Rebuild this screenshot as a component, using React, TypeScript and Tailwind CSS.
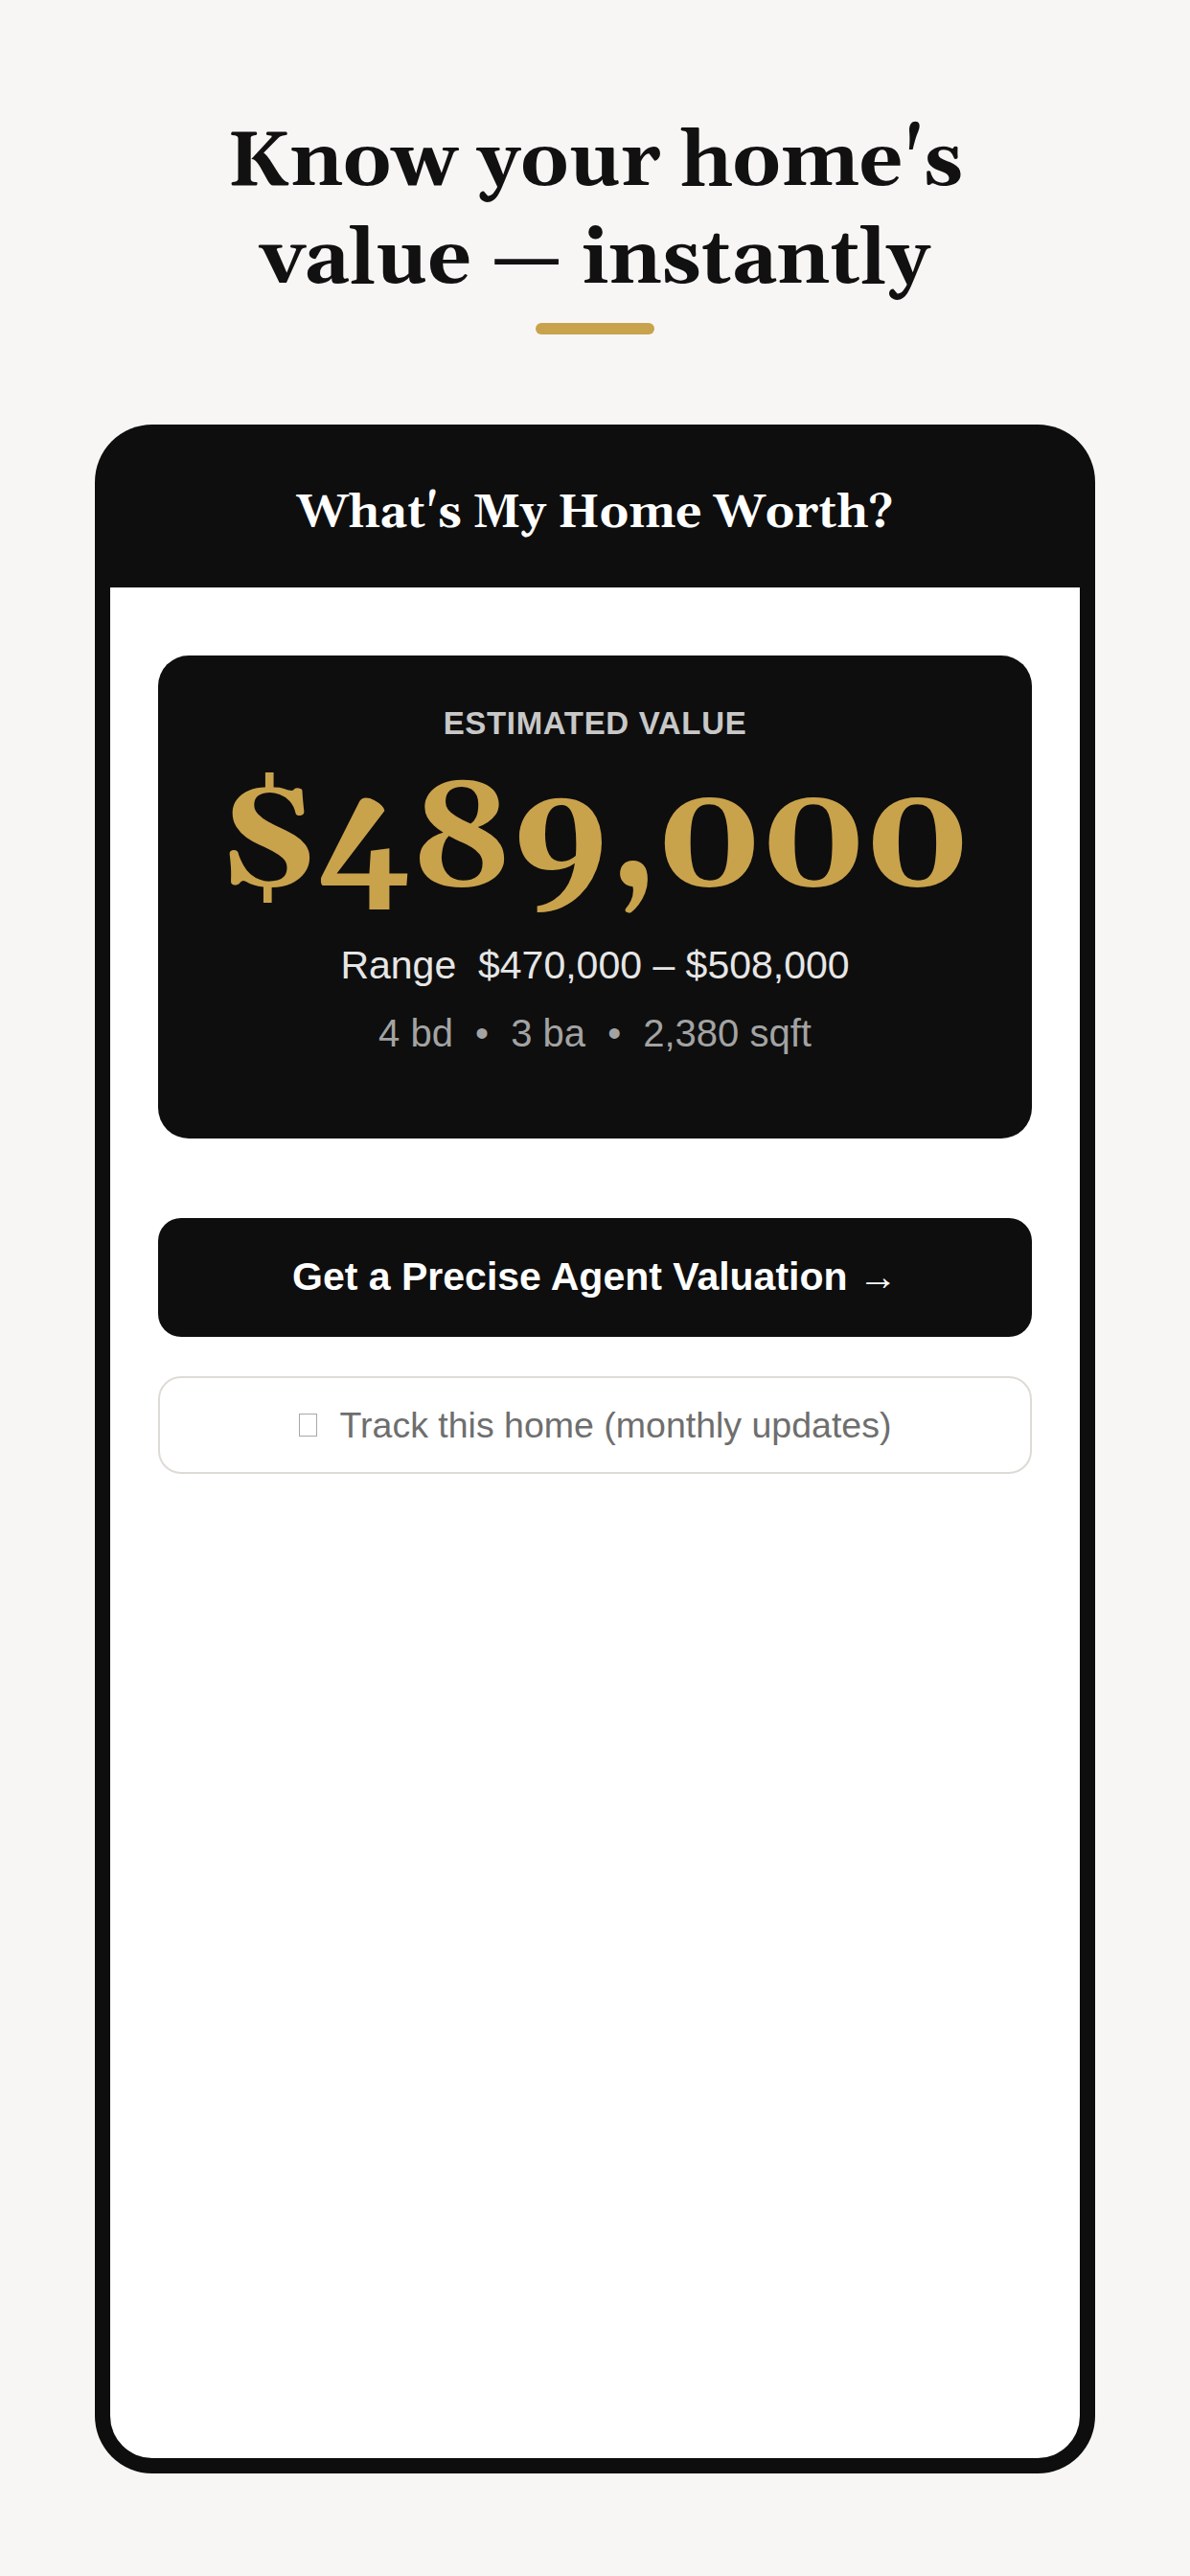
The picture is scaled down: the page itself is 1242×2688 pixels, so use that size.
import React from "react";

const serif = "font-['Georgia','Gelasio','DejaVu_Serif',serif]";
const sans = "font-['Liberation_Sans','Arial',sans-serif]";

export default function App() {
  return (
    <div className="min-h-[2688px] bg-[#f7f6f4] pt-[119px]">
      {/* Heading */}
      <h1
        className={`${serif} text-center text-[80px] font-bold leading-[1.27] text-[#111111]`}
      >
        Know your home's
        <br />
        value — instantly
      </h1>
      <div className="mx-auto mt-[15px] h-3 w-[124px] rounded-full bg-[#c9a24c]" />

      {/* Phone frame */}
      <div className="mx-auto mt-[94px] flex h-[2138px] w-[1044px] flex-col rounded-[60px] bg-[#0e0e0e] p-4">
        <div className="flex h-[154px] shrink-0 items-center justify-center">
          <h2 className={`${serif} text-[48px] font-bold text-white`}>
            What's My Home Worth?
          </h2>
        </div>

        <div className={`${sans} flex-1 rounded-b-[44px] bg-white px-[50px] pt-[71px]`}>
          {/* Estimate card */}
          <div className="flex h-[504px] flex-col items-center rounded-[32px] bg-[#0e0e0e] pt-[54px] text-center">
            <p className="text-[33px] font-bold uppercase leading-none tracking-[0.02em] text-[#c8c8c8]">
              Estimated Value
            </p>
            <p
              className={`${serif} mt-[30px] text-[155px] font-bold leading-none text-[#c9a24c]`}
            >
              $489,000
            </p>
            <p className="mt-[31px] whitespace-pre text-[41px] leading-none text-[#e6e6e6]">
              {"Range  $470,000 – $508,000"}
            </p>
            <p className="mt-[30px] text-[40px] leading-none text-[#a3a3a3]">
              4 bd <span className="mx-3">•</span> 3 ba{" "}
              <span className="mx-3">•</span> 2,380 sqft
            </p>
          </div>

          {/* Actions */}
          <button className="mt-[83px] flex h-[124px] w-full items-center justify-center rounded-[24px] bg-[#0e0e0e] text-[41px] font-bold text-white">
            Get a Precise Agent Valuation →
          </button>
          <button className="mt-[41px] flex h-[102px] w-full items-center justify-center rounded-[24px] border-2 border-[#dedbd6] bg-white text-[37.5px] text-[#6e6e6e]">
            <span className="h-[24px] w-[19px] border border-[#a8a8a8]" />
            <span className="ml-[24px]">Track this home (monthly updates)</span>
          </button>
        </div>
      </div>
    </div>
  );
}
